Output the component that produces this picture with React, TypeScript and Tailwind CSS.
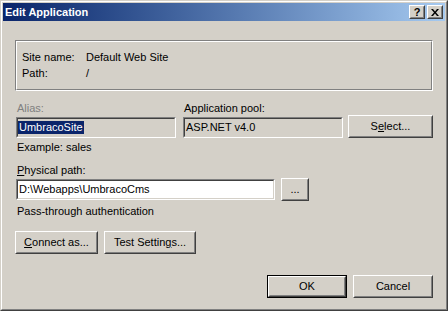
const face = 'bg-[#D4D0C8]';

function Raised({ children, className = '', isDefault = false }: { children: React.ReactNode; className?: string; isDefault?: boolean }) {
  const body = (
    <div className="h-full w-full border border-t-white border-l-white border-r-[#404040] border-b-[#404040]">
      <div className="h-full w-full border border-t-[#D4D0C8] border-l-[#D4D0C8] border-r-[#808080] border-b-[#808080] flex items-center justify-center">
        {children}
      </div>
    </div>
  );
  if (isDefault) {
    return <div className={`border border-black ${className}`}>{body}</div>;
  }
  return <div className={className}>{body}</div>;
}

function Sunken({ children, className = '', white = false }: { children: React.ReactNode; className?: string; white?: boolean }) {
  return (
    <div className={`border border-t-[#808080] border-l-[#808080] border-r-white border-b-white ${className}`}>
      <div
        className={`h-full w-full border border-t-[#404040] border-l-[#404040] border-r-[#D4D0C8] border-b-[#D4D0C8] flex items-center ${
          white ? 'bg-white' : face
        }`}
      >
        {children}
      </div>
    </div>
  );
}

export default function App() {
  return (
    <div className="w-[448px] h-[311px] border border-t-[#D4D0C8] border-l-[#D4D0C8] border-r-[#404040] border-b-[#404040] [font-family:'Liberation_Sans',Arial,sans-serif] text-[11px] leading-[13px] text-black">
      <div className={`h-full border border-t-white border-l-white border-r-[#808080] border-b-[#808080] p-px ${face} flex flex-col`}>
        {/* title bar */}
        <div className="h-[18px] flex items-center bg-gradient-to-r from-[#0A246A] to-[#A6CAF0] pl-[2px] pr-[2px]">
          <span className="font-bold text-white flex-1">Edit Application</span>
          <Raised className="w-[16px] h-[14px] bg-[#D4D0C8]">
            <span className="font-bold text-[11px] leading-[10px]">?</span>
          </Raised>
          <Raised className="w-[16px] h-[14px] ml-[2px] bg-[#D4D0C8]">
            <svg width="8" height="7" viewBox="0 0 8 7">
              <path d="M0 0h2l2 2.5 2-2.5h2l-3 3.5 3 3.5h-2l-2-2.5-2 2.5h-2l3-3.5z" fill="#000" />
            </svg>
          </Raised>
        </div>

        <div className="flex-1 flex flex-col px-[12px]">
          {/* site info group */}
          <div className="mt-[19px] h-[51px] border border-t-[#808080] border-l-[#808080] border-r-white border-b-white">
            <div className="h-full border border-t-white border-l-white border-r-[#808080] border-b-[#808080] pt-[9px] pl-[5px]">
              <div className="flex">
                <span className="w-[64px]">Site name:</span>
                <span>Default Web Site</span>
              </div>
              <div className="flex mt-[3px]">
                <span className="w-[64px]">Path:</span>
                <span>/</span>
              </div>
            </div>
          </div>

          {/* alias / pool */}
          <div className="flex items-end mt-[11px]">
            <div className="w-[160px] ml-px flex flex-col">
              <span className="pl-px text-[#808080]">Alias:</span>
              <Sunken className="h-[21px] mt-[2px]">
                <span className="bg-[#0A246A] text-white px-px">UmbracoSite</span>
              </Sunken>
            </div>
            <div className="w-[160px] ml-[7px] flex flex-col">
              <span className="pl-px">Application pool:</span>
              <Sunken className="h-[21px] mt-[2px]">
                <span className="pl-px">ASP.NET v4.0</span>
              </Sunken>
            </div>
            <Raised className="w-[85px] h-[23px] ml-[5px]">
              <span>
                S<span className="underline">e</span>lect...
              </span>
            </Raised>
          </div>

          <span className="mt-[3px] pl-[2px]">Example: sales</span>

          <span className="mt-[10px] pl-[2px]">
            <span className="underline">P</span>hysical path:
          </span>
          <div className="flex items-center mt-px ml-px">
            <Sunken className="w-[259px] h-[21px]" white>
              <span className="pl-px">D:\Webapps\UmbracoCms</span>
            </Sunken>
            <Raised className="w-[28px] h-[23px] ml-[6px]">
              <span>...</span>
            </Raised>
          </div>

          <span className="mt-[4px] pl-[2px]">Pass-through authentication</span>

          <div className="flex mt-[13px]">
            <Raised className="w-[83px] h-[23px]">
              <span>
                <span className="underline">C</span>onnect as...
              </span>
            </Raised>
            <Raised className="w-[92px] h-[23px] ml-[6px]">
              <span>
                Test Settin<span className="underline">g</span>s...
              </span>
            </Raised>
          </div>

          <div className="flex justify-end mt-[21px]">
            <Raised className="w-[80px] h-[23px]" isDefault>
              <span>OK</span>
            </Raised>
            <Raised className="w-[80px] h-[23px] ml-[6px]">
              <span>Cancel</span>
            </Raised>
          </div>
        </div>
      </div>
    </div>
  );
}
